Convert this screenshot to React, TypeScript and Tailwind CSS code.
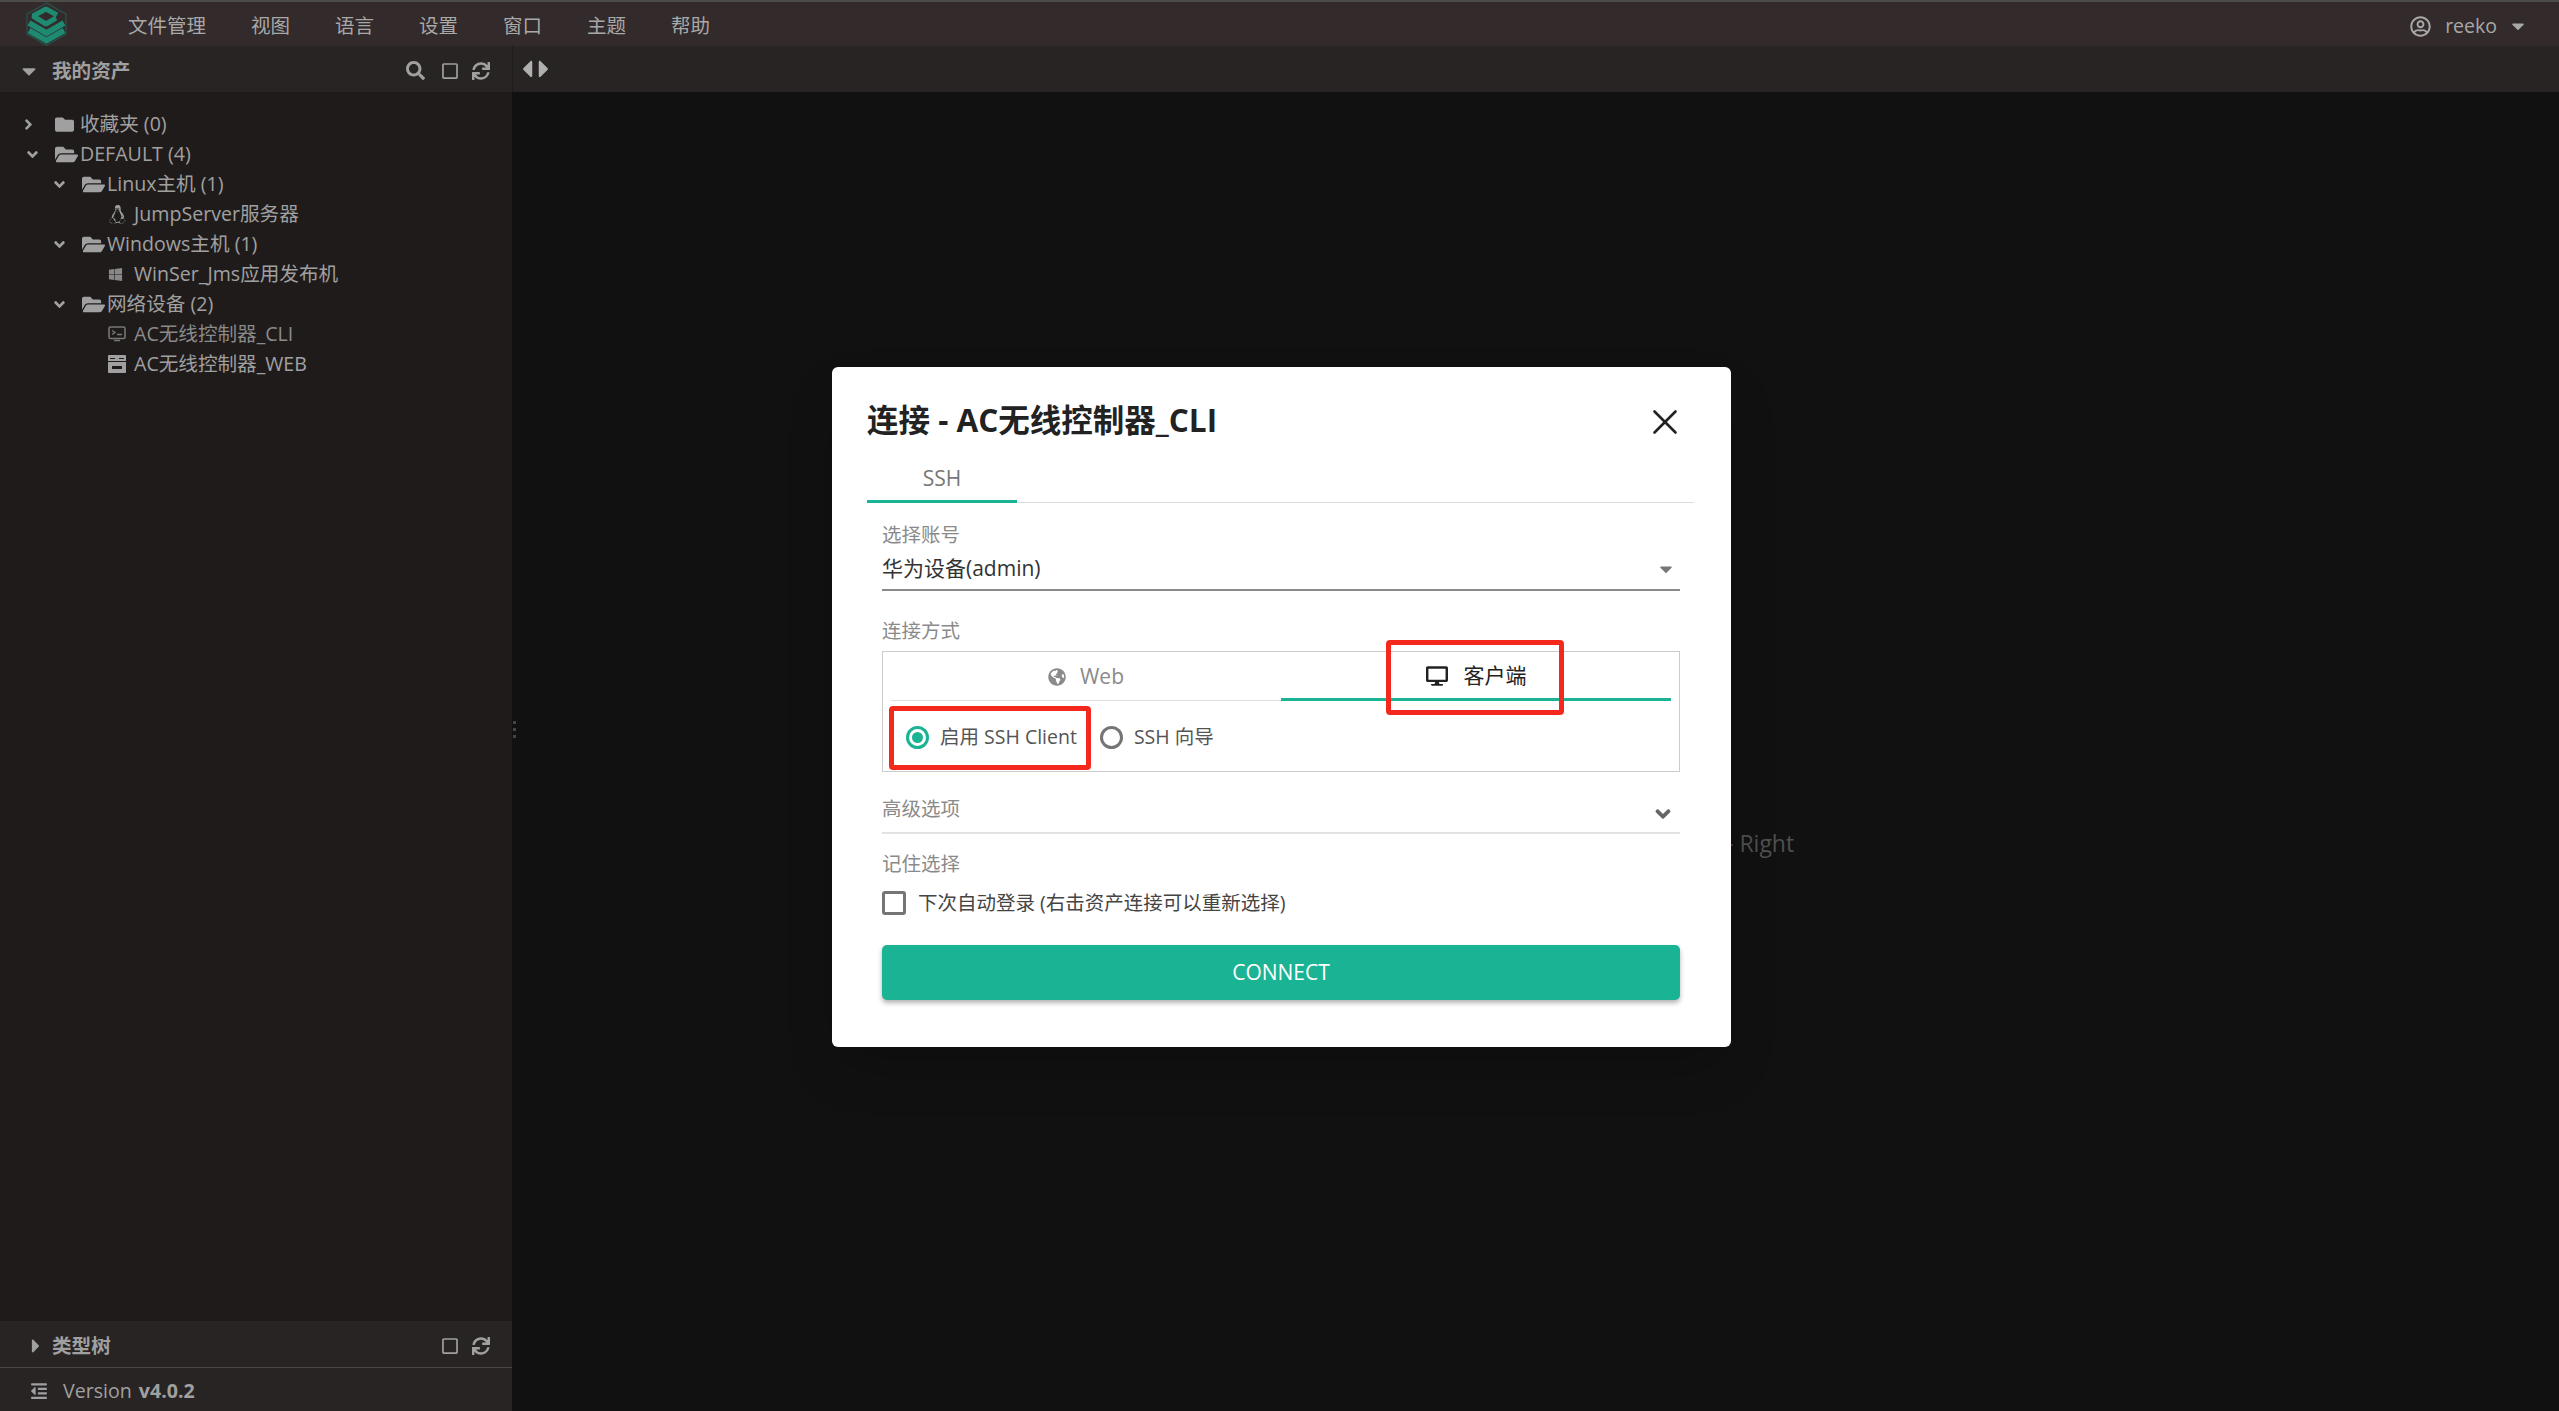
import {
  FaAngleDown,
  FaAngleRight,
  FaCaretDown,
  FaCaretLeft,
  FaCaretRight,
  FaDesktop,
  FaFolder,
  FaFolderOpen,
  FaGlobeAmericas,
  FaLinux,
  FaOutdent,
  FaRegSquare,
  FaRegUserCircle,
  FaSearch,
  FaSync,
  FaWindows,
} from "react-icons/fa";
import { X } from "lucide-react";

const menus = ["文件管理", "视图", "语言", "设置", "窗口", "主题", "帮助"];

function Logo() {
  return (
    <svg width="44" height="46" viewBox="0 0 44 46" fill="none">
      <path d="M22.5 2 42 13V33L22.5 44.5 3 33V13Z" stroke="#2c4b47" strokeWidth="1.5" />
      <path d="M33 14 22 8 9 15 22 23 32 17" stroke="#1f8a72" strokeWidth="5" strokeLinejoin="bevel" />
      <path d="M5 22 22.5 32 40 22" stroke="#1f8a72" strokeWidth="6" />
      <path d="M5 29.5 22.5 39.5 40 29.5" stroke="#1f8a72" strokeWidth="5.5" />
    </svg>
  );
}

function CliIcon() {
  return (
    <svg width="18" height="16" viewBox="0 0 18 16" fill="none">
      <rect x="1" y="1" width="16" height="11.5" rx="1.5" stroke="#777" strokeWidth="1.6" />
      <path d="M4 4.5 7 6.5 4 8.5M9 8.5H14M6 14.5H12" stroke="#777" strokeWidth="1.4" />
    </svg>
  );
}

function WebIcon() {
  return (
    <svg width="18" height="18" viewBox="0 0 18 18">
      <path d="M1 0H17A1 1 0 0 1 18 1V17A1 1 0 0 1 17 18H1A1 1 0 0 1 0 17V1A1 1 0 0 1 1 0Z" fill="#a0a0a0" />
      <path d="M2 3H7V4H2ZM11 3H16V4H11ZM0 6H18V7H0ZM4 11H14V14H4Z" fill="#1f1b1b" />
    </svg>
  );
}

// depth is the indent level, leaves have an icon instead of a chevron and folder
const tree = [
  { label: "收藏夹 (0)", depth: 0, closed: true },
  { label: "DEFAULT (4)", depth: 0 },
  { label: "Linux主机 (1)", depth: 1 },
  { label: "JumpServer服务器", depth: 2, icon: <FaLinux className="text-[19px]" /> },
  { label: "Windows主机 (1)", depth: 1 },
  { label: "WinSer_Jms应用发布机", depth: 2, icon: <FaWindows className="text-[15px] text-[#888]" /> },
  { label: "网络设备 (2)", depth: 1 },
  { label: "AC无线控制器_CLI", depth: 2, icon: <CliIcon />, dim: true },
  { label: "AC无线控制器_WEB", depth: 2, icon: <WebIcon /> },
];

function TreeRow({ item }: { item: (typeof tree)[number] }) {
  if (item.icon) {
    return (
      <div className="flex h-[30px] items-center pl-[108px]">
        <span className="flex w-[26px] shrink-0 items-center">{item.icon}</span>
        <span className={item.dim ? "text-[#8a8a8a]" : ""}>{item.label}</span>
      </div>
    );
  }
  return (
    <div className={item.depth === 1 ? "flex h-[30px] items-center pl-[51px]" : "flex h-[30px] items-center pl-[24px]"}>
      <span className="flex w-[31px] shrink-0 items-center">
        {item.closed ? <FaAngleRight className="-ml-[4px] text-[17px]" /> : <FaAngleDown className="text-[17px]" />}
      </span>
      <span className="flex w-[25px] shrink-0 items-center">
        {item.closed ? <FaFolder className="text-[19px]" /> : <FaFolderOpen className="text-[23px]" />}
      </span>
      <span>{item.label}</span>
    </div>
  );
}

function Sidebar() {
  return (
    <aside className="flex w-[512px] shrink-0 flex-col bg-[#1f1b1b] text-[19.6px] text-[#a0a0a0]">
      <div className="flex h-[46px] shrink-0 items-center bg-[#282424] pl-[18px] pr-[22px] pt-[3px]">
        <FaCaretDown className="text-[22px]" />
        <span className="ml-[12px] font-semibold">我的资产</span>
        <div className="ml-auto flex items-center">
          <FaSearch className="text-[19px]" />
          <FaRegSquare className="ml-[16px] text-[18px]" />
          <FaSync className="ml-[13px] text-[18px]" />
        </div>
      </div>
      <div className="flex-1 pt-[17px]">
        {tree.map((item) => (
          <TreeRow key={item.label} item={item} />
        ))}
      </div>
      <div className="flex h-[46px] shrink-0 items-center bg-[#282424] pl-[25px] pr-[22px] pt-[3px]">
        <FaCaretRight className="text-[22px]" />
        <span className="ml-[5px] font-semibold">类型树</span>
        <div className="ml-auto flex items-center">
          <FaRegSquare className="text-[18px]" />
          <FaSync className="ml-[13px] text-[18px]" />
        </div>
      </div>
      <div className="flex h-[44px] shrink-0 items-center border-t border-[#4a4646] bg-[#282424] pl-[30px] pt-[3px] text-[19.6px]">
        <FaOutdent className="text-[18px]" />
        <span className="ml-[15px]">Version</span>
        <span className="ml-[7px] font-bold">v4.0.2</span>
      </div>
    </aside>
  );
}

function Radio({ checked, label }: { checked?: boolean; label: string }) {
  return (
    <label className="flex items-center gap-[11px]">
      <span
        className={
          checked
            ? "flex h-[23px] w-[23px] items-center justify-center rounded-full border-[3px] border-[#1ab394]"
            : "h-[23px] w-[23px] rounded-full border-[3px] border-[#757575]"
        }
      >
        {checked && <span className="h-[11px] w-[11px] rounded-full bg-[#1ab394]" />}
      </span>
      <span>{label}</span>
    </label>
  );
}

function ConnectDialog() {
  return (
    <div className="absolute left-[832px] top-[367px] h-[680px] w-[899px] rounded-[6px] bg-white pl-[35px] pr-[37px] pt-[30px] text-[19.5px] shadow-2xl">
      <div className="flex items-center justify-between pr-[8px]">
        <h2 className="text-[31.5px] font-bold leading-[46px] text-[#222]">连接 - AC无线控制器_CLI</h2>
        <X className="mt-[4px] h-[42px] w-[42px] text-[#222]" strokeWidth={1.5} />
      </div>
      <div className="mt-[9px] h-[51px] border-b border-[#ddd]">
        <div className="flex h-[51px] w-[150px] items-center justify-center border-b-[3px] border-[#1ab394] pt-[6px] text-[#777]">
          <span className="text-[21px]">SSH</span>
        </div>
      </div>
      <div className="pl-[15px] pr-[14px]">
        <div className="mt-[18px] leading-[28px] text-[#8a8a8a]">选择账号</div>
        <div className="flex h-[42px] items-center justify-between border-b-2 border-[#8a8a8a] pr-[4px] text-[21px] text-[#333]">
          <span>华为设备(admin)</span>
          <FaCaretDown className="text-[20px] text-[#777]" />
        </div>
        <div className="mt-[26px] leading-[28px] text-[#8a8a8a]">连接方式</div>
        <div className="mt-[6px] h-[121px] border border-[#ccc] px-[8px]">
          <div className="flex h-[49px] border-b border-[#ddd]">
            <div className="flex w-[390px] items-center justify-center gap-[14px] pt-[2px] text-[#8a8a8a]">
              <FaGlobeAmericas className="text-[18px]" />
              <span className="text-[21px]">Web</span>
            </div>
            <div className="flex h-[49px] w-[390px] items-center justify-center gap-[16px] border-b-[3px] border-[#1ab394] pt-[2px] text-[21px] text-[#222]">
              <FaDesktop className="text-[22px]" />
              <span>客户端</span>
            </div>
          </div>
          <div className="flex h-[70px] items-center gap-[23px] pl-[15px] pt-[2px] text-[#555]">
            <Radio checked label="启用 SSH Client" />
            <Radio label="SSH 向导" />
          </div>
        </div>
        <div className="mt-[19px] flex h-[43px] items-center justify-between border-b-2 border-[#e2e2e2] pb-[6px] pr-[5px] text-[#8a8a8a]">
          <span>高级选项</span>
          <FaAngleDown className="mt-[10px] text-[24px] text-[#666]" />
        </div>
        <div className="mt-[16px] leading-[28px] text-[#8a8a8a]">记住选择</div>
        <div className="mt-[12px] flex h-[26px] items-center gap-[12px] text-[#444]">
          <span className="h-[24px] w-[24px] rounded-[3px] border-[3px] border-[#757575]" />
          <span>下次自动登录 (右击资产连接可以重新选择)</span>
        </div>
        <button className="mt-[29px] h-[55px] w-full rounded-[5px] bg-[#1ab394] pt-[1px] text-[21px] font-medium text-white shadow-[0_3px_5px_rgba(0,0,0,0.3)]">
          CONNECT
        </button>
      </div>
      {/* red annotation boxes drawn over the screenshot */}
      <div className="absolute left-[554px] top-[273px] h-[75px] w-[178px] rounded-[4px] border-[5px] border-[#f5281e]" />
      <div className="absolute left-[57px] top-[339px] h-[64px] w-[202px] rounded-[4px] border-[5px] border-[#f5281e]" />
    </div>
  );
}

export default function App() {
  return (
    <div className="relative flex h-screen flex-col overflow-hidden bg-[#111111] font-['Open_Sans','Noto_Sans_CJK_SC',sans-serif]">
      <header className="flex h-[46px] shrink-0 items-center border-t-2 border-[#4b4b47] bg-[#322a2b] pr-[31px] pt-[4px] text-[19.5px] text-[#a8a8a8]">
        <div className="-mt-[5px] ml-[24px] w-[44px] shrink-0">
          <Logo />
        </div>
        <nav className="ml-[60px] flex gap-[45px]">
          {menus.map((m) => (
            <span key={m}>{m}</span>
          ))}
        </nav>
        <div className="ml-auto flex items-center">
          <FaRegUserCircle className="text-[21px]" />
          <span className="ml-[14px]">reeko</span>
          <FaCaretDown className="ml-[11px] text-[20px]" />
        </div>
      </header>
      <div className="flex min-h-0 flex-1">
        <Sidebar />
        <main className="flex flex-1 flex-col">
          <div className="flex h-[46px] shrink-0 items-center border-l border-[#1f1b1b] bg-[#282424] text-[#b0b0b0]">
            <FaCaretLeft className="text-[28px]" />
            <FaCaretRight className="-ml-[11px] text-[28px]" />
          </div>
          <div className="pl-[1214px] pt-[734px] text-[23px] text-[#4f4f4f]">- Right</div>
        </main>
      </div>
      {/* splitter grip */}
      <div className="absolute left-[513px] top-[721px] flex flex-col gap-[4px]">
        <span className="h-[3px] w-[3px] bg-[#444]" />
        <span className="h-[3px] w-[3px] bg-[#444]" />
        <span className="h-[3px] w-[3px] bg-[#444]" />
      </div>
      <ConnectDialog />
    </div>
  );
}
